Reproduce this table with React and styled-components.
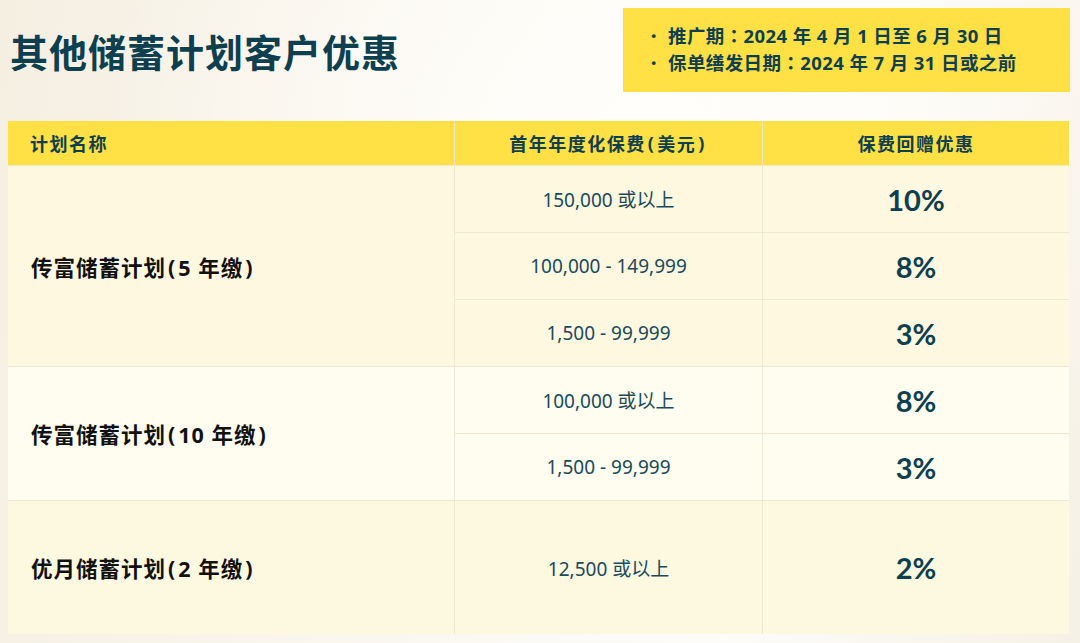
import styled, { createGlobalStyle } from 'styled-components';

const GlobalStyle = createGlobalStyle`
  html, body {
    margin: 0;
    padding: 0;
  }
  body {
    width: 1080px;
    height: 643px;
    overflow: hidden;
    font-family: "Noto Sans", "Noto Sans CJK SC", sans-serif;
  }
`;

const plans = [
  {
    name: '传富储蓄计划',
    term: '5 年缴',
    bg: '#fff8e1',
    tiers: [
      { premium: '150,000 或以上', rebate: '10%' },
      { premium: '100,000 - 149,999', rebate: '8%' },
      { premium: '1,500 - 99,999', rebate: '3%' },
    ],
  },
  {
    name: '传富储蓄计划',
    term: '10 年缴',
    bg: '#fffcf0',
    tiers: [
      { premium: '100,000 或以上', rebate: '8%' },
      { premium: '1,500 - 99,999', rebate: '3%' },
    ],
  },
  {
    name: '优月储蓄计划',
    term: '2 年缴',
    bg: '#fdf8e0',
    tiers: [{ premium: '12,500 或以上', rebate: '2%' }],
  },
];

const App = () => {
  let row = 2;
  return (
    <Page>
      <GlobalStyle />
      <Header>
        <Title>其他储蓄计划客户优惠</Title>
        <Notice>
          <NoticeItem>推广期：2024 年 4 月 1 日至 6 月 30 日</NoticeItem>
          <NoticeItem>保单缮发日期：2024 年 7 月 31 日或之前</NoticeItem>
        </Notice>
      </Header>
      <Table>
        <HeadCell $left>计划名称</HeadCell>
        <HeadCell>
          首年年度化保费<Paren>(</Paren>美元<Paren>)</Paren>
        </HeadCell>
        <HeadCell>保费回赠优惠</HeadCell>
        {plans.map((plan) => {
          const start = row;
          row += plan.tiers.length;
          return [
            <NameCell
              key={plan.term}
              $bg={plan.bg}
              $start={start}
              $span={plan.tiers.length}
            >
              {plan.name}
              <Paren>(</Paren>
              {plan.term}
              <Paren>)</Paren>
            </NameCell>,
            ...plan.tiers.map((tier, i) => [
              <ValueCell
                key={plan.term + i + 'p'}
                $bg={plan.bg}
                $row={start + i}
                $col={2}
              >
                {tier.premium}
              </ValueCell>,
              <RebateCell
                key={plan.term + i + 'r'}
                $bg={plan.bg}
                $row={start + i}
                $col={3}
              >
                {tier.rebate}
              </RebateCell>,
            ]),
          ];
        })}
      </Table>
    </Page>
  );
};

export default App;

// Styled components
const Page = styled.div`
  width: 1080px;
  height: 643px;
  box-sizing: border-box;
  padding: 8px 10px 0 8px;
  background:
    radial-gradient(ellipse at 60% 20%, #fffefb 0%, rgba(255, 254, 251, 0) 60%),
    linear-gradient(100deg, #f5efe2 0%, #fbf8f1 45%, #fdfcf8 70%, #f6f1e6 100%);
`;

const Header = styled.div`
  display: flex;
  justify-content: space-between;
  align-items: center;
  height: 84px;
  margin-bottom: 29px;
`;

const Title = styled.h1`
  margin: 0 0 0 2px;
  font-size: 38px;
  font-weight: 700;
  letter-spacing: 1px;
  color: #0d3f4f;
  font-family: "Noto Sans CJK SC", sans-serif;
`;

const Notice = styled.ul`
  list-style: none;
  margin: 0;
  width: 447px;
  height: 84px;
  box-sizing: border-box;
  padding: 14px 0 0 28px;
  background: #ffe045;
  font-family: "Noto Sans", "Noto Sans CJK TC", sans-serif;
`;

const NoticeItem = styled.li`
  position: relative;
  padding-left: 17px;
  font-size: 18.5px;
  line-height: 27px;
  font-weight: 700;
  color: #0d3f4f;
  letter-spacing: 0.4px;

  &::before {
    content: '·';
    position: absolute;
    left: 0;
    top: 0;
    font-weight: 900;
  }
`;

const Paren = styled.span`
  margin: 0 2px;
`;

const Table = styled.div`
  display: grid;
  grid-template-columns: 446px 307px 1fr;
  grid-template-rows: 44px repeat(5, 66px) 133px;
  gap: 1px;
  background: #efe7d0;
  width: 1061px;
`;

const HeadCell = styled.div`
  display: flex;
  align-items: center;
  justify-content: ${(p) => (p.$left ? 'flex-start' : 'center')};
  padding-left: ${(p) => (p.$left ? '22px' : '0')};
  background: #ffe045;
  font-size: 18px;
  font-weight: 700;
  color: #0d3f4f;
  letter-spacing: 1.5px;
`;

const NameCell = styled.div`
  grid-column: 1;
  grid-row: ${(p) => p.$start} / span ${(p) => p.$span};
  display: flex;
  align-items: center;
  padding-left: 23px;
  background: ${(p) => p.$bg};
  font-size: 21.5px;
  font-weight: 700;
  color: #111;
  letter-spacing: 1px;
  white-space: pre;
`;

const ValueCell = styled.div`
  grid-column: ${(p) => p.$col};
  grid-row: ${(p) => p.$row};
  display: flex;
  align-items: center;
  justify-content: center;
  background: ${(p) => p.$bg};
  font-size: 19px;
  color: #1b4a58;
`;

const RebateCell = styled(ValueCell)`
  font-family: "Lato", sans-serif;
  font-size: 29px;
  font-weight: 700;
  color: #0d3f4f;
`;
